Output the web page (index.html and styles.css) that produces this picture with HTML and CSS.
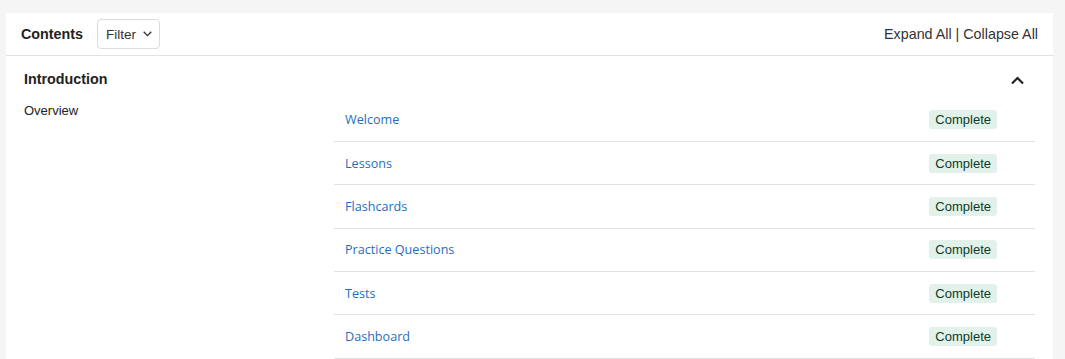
FILE: index.html
```html
<!DOCTYPE html>
<html lang="en">
<head>
    <meta charset="UTF-8">
    <meta name="viewport" content="width=device-width, initial-scale=1.0">
    <title>Contents</title>
    <link rel="stylesheet" href="styles.css">
</head>
<body>
    <div class="card">
        <header class="card-header">
            <div class="header-left">
                <h2>Contents</h2>
                <button class="filter-btn">Filter
                    <svg width="9" height="6" viewBox="0 0 9 6"><path d="M0.7 0.8 L4.5 4.6 L8.3 0.8" fill="none" stroke="#333" stroke-width="1.3"/></svg>
                </button>
            </div>
            <div class="header-links">
                <a href="#">Expand All</a> | <a href="#">Collapse All</a>
            </div>
        </header>

        <section class="chapter">
            <div class="chapter-title">
                <h3>Introduction</h3>
                <svg class="chevron" width="13" height="9" viewBox="0 0 13 9"><path d="M1 7.5 L6.5 2 L12 7.5" fill="none" stroke="#222" stroke-width="2.2"/></svg>
            </div>
            <div class="chapter-body">
                <p class="topic">Overview</p>
                <ul class="lessons">
                    <li><a href="#">Welcome</a><span class="badge">Complete</span></li>
                    <li><a href="#">Lessons</a><span class="badge">Complete</span></li>
                    <li><a href="#">Flashcards</a><span class="badge">Complete</span></li>
                    <li><a href="#">Practice Questions</a><span class="badge">Complete</span></li>
                    <li><a href="#">Tests</a><span class="badge">Complete</span></li>
                    <li><a href="#">Dashboard</a><span class="badge">Complete</span></li>
                </ul>
            </div>
        </section>
    </div>
</body>
</html>
```

FILE: styles.css
```css
/* Page */
body {
    margin: 0;
    padding: 13px 12px 0 6px;
    background-color: #f5f5f5;
    font-family: 'Liberation Sans', Arial, sans-serif;
    color: #222;
}

.card {
    background: #ffffff;
    min-height: 360px;
}

/* Header */
.card-header {
    display: flex;
    align-items: center;
    justify-content: space-between;
    height: 42px;
    padding: 0 15px;
    border-bottom: 1px solid #e2e2e2;
}

.header-left {
    display: flex;
    align-items: center;
    gap: 14px;
}

.header-left h2 {
    margin: 0;
    font-size: 14.3px;
    font-weight: bold;
    color: #222;
}

.filter-btn {
    display: flex;
    align-items: center;
    gap: 7px;
    height: 30px;
    padding: 0 7px 0 8px;
    background: #fff;
    border: 1px solid #dcdcdc;
    border-radius: 4px;
    font-family: inherit;
    font-size: 13.5px;
    color: #333;
}

.header-links {
    font-size: 14.3px;
    color: #333;
}

.header-links a {
    color: #333;
    text-decoration: none;
}

/* Chapter */
.chapter {
    padding: 13px 18px 0 18px;
}

.chapter-title {
    display: flex;
    align-items: center;
    justify-content: space-between;
    height: 20px;
    padding-right: 11px;
}

.chapter-title h3 {
    margin: 0;
    font-size: 14.3px;
    font-weight: bold;
    color: #222;
}

.chevron {
    margin-top: 2px;
}

.chapter-body {
    display: grid;
    grid-template-columns: 310px 1fr;
    margin-top: 9.5px;
}

.topic {
    margin: 2.5px 0 0;
    font-size: 13px;
    line-height: 20px;
    color: #222;
}

.lessons {
    list-style: none;
    margin: 0;
    padding: 0;
}

.lessons li {
    display: flex;
    align-items: center;
    justify-content: space-between;
    height: 42.4px;
    padding: 0 38px 0 11px;
    border-bottom: 1px solid #e2e2e2;
}

.lessons a {
    font-family: 'Open Sans', sans-serif;
    font-size: 12.6px;
    color: #1f6dc2;
    text-decoration: none;
}

.badge {
    padding: 2px 6px;
    background: #e2f1ea;
    border-radius: 3px;
    font-size: 13px;
    line-height: 15px;
    color: #0d3b26;
}
```
